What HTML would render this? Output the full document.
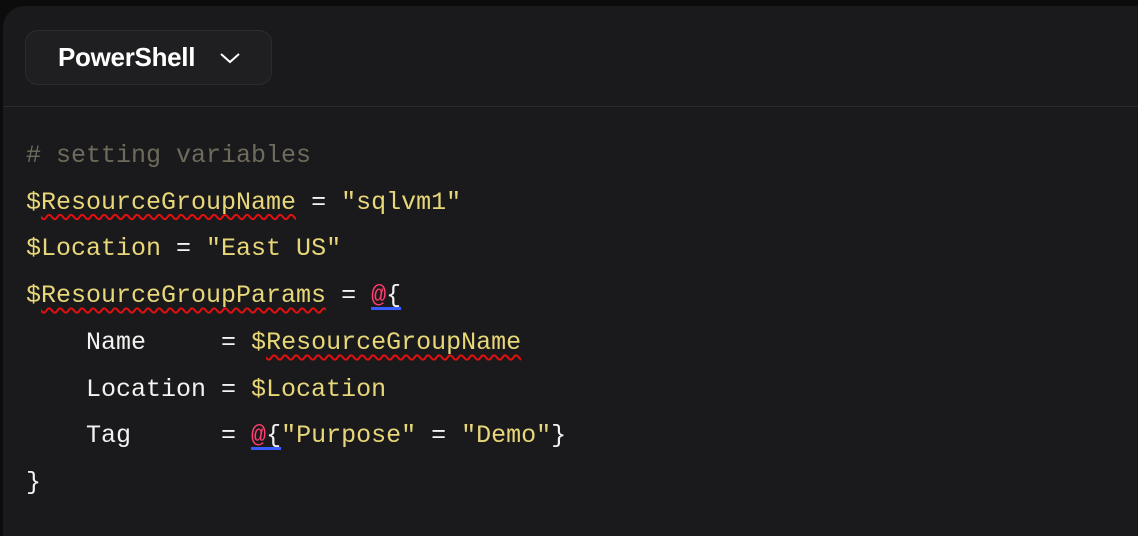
<!DOCTYPE html>
<html><head><style>
html,body{margin:0;padding:0;background:#0c0c0d;width:1138px;height:525px;overflow:hidden}
.panel{position:absolute;left:3px;top:6px;width:1140px;height:530px;background:#1a1a1c;border-top-left-radius:22px}
.hdr{position:absolute;left:0;top:0;width:100%;height:100px;border-bottom:1px solid #2b2b2e}
.btn{position:absolute;left:22px;top:24px;width:247px;height:55px;box-sizing:border-box;background:#1f1f21;border:1px solid #2c2c2f;border-radius:13px;font-family:"Liberation Sans",sans-serif;font-weight:bold;font-size:26px;color:#fff;letter-spacing:-0.3px}
.btn span{position:absolute;left:32px;top:11px}
.btn svg{position:absolute;left:193px;top:20px}
pre{position:absolute;left:23px;top:127px;margin:0;font-family:"Liberation Mono",monospace;font-size:25px;line-height:46.7px;color:#f2f2f2}
.c{color:#6f6b5c}.y{color:#e8d779}.p{color:#ff3d6e}
.w{text-decoration:underline wavy #e01010;text-underline-offset:5px;text-decoration-thickness:1.5px}
.b{text-decoration:underline solid #3a5cff;text-underline-offset:5px;text-decoration-thickness:3px}
</style></head><body>
<div class="panel">
<div class="hdr"><div class="btn"><span>PowerShell</span><svg width="22" height="14" viewBox="0 0 22 14"><path d="M2 3 L11 11 L20 3" fill="none" stroke="#fff" stroke-width="2"/></svg></div></div>
<pre><span class="c"># setting variables</span>
<span class="y">$<span class="w">ResourceGroupName</span></span> = <span class="y">"sqlvm1"</span>
<span class="y">$Location</span> = <span class="y">"East US"</span>
<span class="y">$<span class="w">ResourceGroupParams</span></span> = <span class="b"><span class="p">@</span>{</span>
    Name     = <span class="y">$<span class="w">ResourceGroupName</span></span>
    Location = <span class="y">$Location</span>
    Tag      = <span class="b"><span class="p">@</span>{</span><span class="y">"Purpose"</span> = <span class="y">"Demo"</span>}
}</pre>
</div>
</body></html>
